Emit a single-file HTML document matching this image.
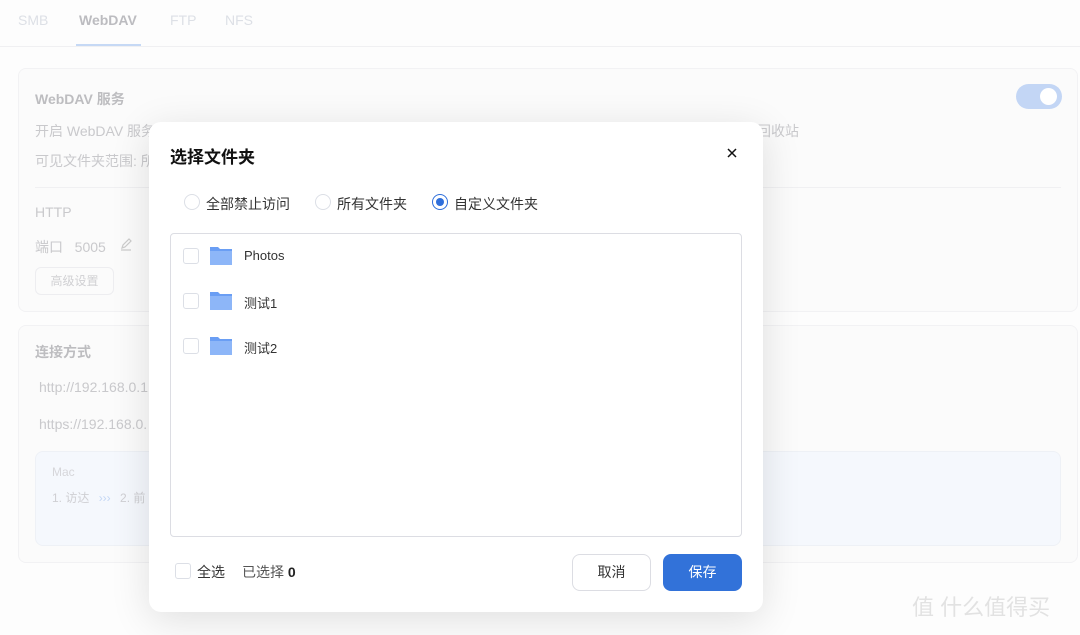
<!DOCTYPE html>
<html><head><meta charset="utf-8"><style>
*{box-sizing:border-box;margin:0;padding:0}
body{width:1080px;height:635px;overflow:hidden;background:#fdfdfd;font-family:"Liberation Sans","Noto Sans CJK SC",sans-serif;position:relative;color:#c9c9cc}
.abs{position:absolute}
.tabs{position:absolute;left:0;top:0;width:1080px;height:47px;border-bottom:1px solid #f0f0f2}
.tab{position:absolute;top:12px;font-size:14px;color:#dde0e6}
.card{position:absolute;background:#fbfbfb;border:1px solid #f2f2f4;border-radius:8px}
.t{position:absolute;font-size:14px;white-space:nowrap}
.modal{position:absolute;left:149px;top:122px;width:614px;height:490px;background:#fff;border-radius:12px;box-shadow:0 8px 40px rgba(0,0,0,.12)}
.radio{position:absolute;width:16px;height:16px;border:1px solid #dcdfe6;border-radius:50%;background:#fff}
.cb{position:absolute;width:16px;height:16px;border:1px solid #dcdfe6;border-radius:3px;background:#fff}
.dt{position:absolute;font-size:14px;color:#333;white-space:nowrap}
</style></head><body>
<div class="tabs">
<div class="tab" style="left:18px">SMB</div>
<div class="tab" style="left:79px;color:#bcbcc0;font-weight:bold">WebDAV</div>
<div class="abs" style="left:76px;top:44px;width:65px;height:2px;background:#c6d9f5"></div>
<div class="tab" style="left:170px">FTP</div>
<div class="tab" style="left:225px">NFS</div>
</div>
<div class="card" style="left:18px;top:68px;width:1060px;height:244px"></div>
<div class="t" style="left:35px;top:89px;color:#bdbdc0;font-weight:bold">WebDAV 服务</div>
<div class="abs" style="left:1016px;top:84px;width:46px;height:25px;border-radius:13px;background:#c3d6f5"></div>
<div class="abs" style="left:1040px;top:88px;width:17px;height:17px;border-radius:50%;background:#fff"></div>
<div class="t" style="left:35px;top:121px">开启 WebDAV 服务</div>
<div class="t" style="left:757px;top:121px">回收站</div>
<div class="t" style="left:35px;top:151px">可见文件夹范围: 所</div>
<div class="abs" style="left:35px;top:187px;width:1026px;height:1px;background:#f0f0f2"></div>
<div class="t" style="left:35px;top:204px">HTTP</div>
<div class="t" style="left:35px;top:237px">端口&nbsp;&nbsp;&nbsp;5005</div>
<svg class="abs" style="left:119px;top:238px" width="14" height="14" viewBox="0 0 14 14"><path d="M2 12h10M3 10l1-3 6-6 2 2-6 6z" fill="none" stroke="#ccc" stroke-width="1.2"/></svg>
<div class="abs" style="left:35px;top:267px;width:79px;height:28px;border:1px solid #ededf0;border-radius:6px;font-size:12px;line-height:26px;text-align:center;color:#d0d0d3">高级设置</div>
<div class="card" style="left:18px;top:325px;width:1060px;height:238px"></div>
<div class="t" style="left:35px;top:342px;color:#bdbdc0;font-weight:bold">连接方式</div>
<div class="t" style="left:39px;top:379px">http://192.168.0.1</div>
<div class="t" style="left:39px;top:416px">https://192.168.0.</div>
<div class="abs" style="left:35px;top:451px;width:1026px;height:95px;background:#f5f8fd;border:1px solid #eef1f6;border-radius:8px"></div>
<div class="t" style="left:52px;top:465px;font-size:12px;color:#d6d6da">Mac</div>
<div class="t" style="left:52px;top:489px;font-size:12px;color:#cfcfd3">1. 访达 <span style="color:#c4d7f5;margin:0 6px">›››</span> 2. 前</div>
<div class="abs" style="left:912px;top:590px;font-size:22px;color:#e2e2e2;white-space:nowrap">值 什么值得买</div>

<div class="modal">
<div class="dt" style="left:21px;top:21px;font-size:17px;font-weight:bold;color:#111">选择文件夹</div>
<svg class="abs" style="left:578px;top:26px" width="10" height="10" viewBox="0 0 10 10"><path d="M1 1l8 8M9 1l-8 8" stroke="#111" stroke-width="1.5"/></svg>
<div class="radio" style="left:35px;top:72px"></div><div class="dt" style="left:57px;top:72px">全部禁止访问</div>
<div class="radio" style="left:166px;top:72px"></div><div class="dt" style="left:188px;top:72px">所有文件夹</div>
<div class="radio" style="left:283px;top:72px;border-color:#2f6fdb"><div style="margin:3px;width:8px;height:8px;border-radius:50%;background:#2f6fdb"></div></div>
<div class="dt" style="left:305px;top:72px">自定义文件夹</div>
<div class="abs" style="left:21px;top:111px;width:572px;height:304px;border:1px solid #dcdde3;border-radius:4px"></div>
<div class="cb" style="left:34px;top:126px"></div>
<svg class="abs" style="left:61px;top:124px" width="22" height="19" viewBox="0 0 22 19"><path d="M0 1h8l2 2h12v16H0z" fill="#6a9ef4"/><rect x="0" y="5" width="22" height="14" fill="#8db6f8"/></svg>
<div class="dt" style="left:95px;top:126px;font-size:13px">Photos</div>
<div class="cb" style="left:34px;top:171px"></div>
<svg class="abs" style="left:61px;top:169px" width="22" height="19" viewBox="0 0 22 19"><path d="M0 1h8l2 2h12v16H0z" fill="#6a9ef4"/><rect x="0" y="5" width="22" height="14" fill="#8db6f8"/></svg>
<div class="dt" style="left:95px;top:171px;font-size:13px">测试1</div>
<div class="cb" style="left:34px;top:216px"></div>
<svg class="abs" style="left:61px;top:214px" width="22" height="19" viewBox="0 0 22 19"><path d="M0 1h8l2 2h12v16H0z" fill="#6a9ef4"/><rect x="0" y="5" width="22" height="14" fill="#8db6f8"/></svg>
<div class="dt" style="left:95px;top:216px;font-size:13px">测试2</div>
<div class="cb" style="left:26px;top:441px"></div>
<div class="dt" style="left:48px;top:440px">全选</div>
<div class="dt" style="left:93px;top:440px;color:#555">已选择 <b style="color:#222">0</b></div>
<div class="abs" style="left:423px;top:432px;width:79px;height:37px;border:1px solid #dcdde3;border-radius:8px;font-size:14px;line-height:35px;text-align:center;color:#333">取消</div>
<div class="abs" style="left:514px;top:432px;width:79px;height:37px;background:#3272d9;border-radius:8px;font-size:14px;line-height:37px;text-align:center;color:#fff">保存</div>
</div>
</body></html>
